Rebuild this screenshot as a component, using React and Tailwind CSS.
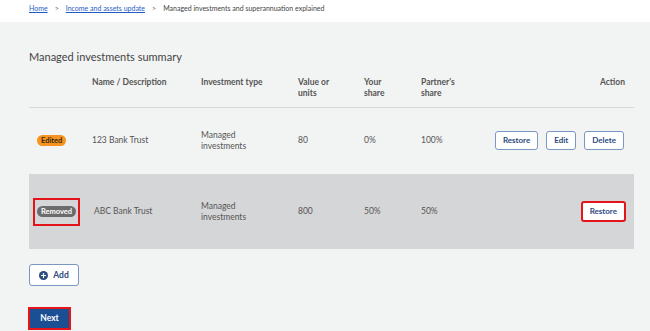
import { Plus } from 'lucide-react';

const rows = [
  { status: 'Edited', name: '123 Bank Trust', type: 'Managed investments', value: '80', yours: '0%', partner: '100%', removed: false },
  { status: 'Removed', name: 'ABC Bank Trust', type: 'Managed investments', value: '800', yours: '50%', partner: '50%', removed: true },
];

function OutlineBtn({ children, className = '' }) {
  return (
    <button className={`h-[19px] px-[7px] rounded-[3px] border border-[#7b97c4] bg-white text-[8px] font-bold text-[#2b4a7e] ${className}`}>
      {children}
    </button>
  );
}

export default function App() {
  return (
    <div className="w-[650px] h-[331px] overflow-hidden bg-[#f2f3f3] text-[#444]" style={{ fontFamily: 'Lato, "Open Sans", sans-serif' }}>
      {/* breadcrumb */}
      <div className="h-[22px] bg-white flex items-center pl-[29px] gap-[7px] text-[7px] pb-[5px]">
        <a className="text-[#1f5bc4] underline">Home</a>
        <span className="text-[#666]">&gt;</span>
        <a className="text-[#1f5bc4] underline">Income and assets update</a>
        <span className="text-[#666]">&gt;</span>
        <span className="text-[#444]">Managed investments and superannuation explained</span>
      </div>

      <div className="px-[29px] pr-[16px]">
        <h1 className="mt-[26px] text-[11px] text-[#444] leading-[18px]">Managed investments summary</h1>

        {/* header */}
        <div className="mt-[8px] grid grid-cols-[63px_109px_97px_66px_57px_1fr_auto] text-[8.5px] font-bold text-[#555] leading-[11px] border-b border-[#d6d6d6] pb-[8px] pt-[3px] pr-[9px]">
          <div />
          <div>Name / Description</div>
          <div>Investment type</div>
          <div>Value or<br />units</div>
          <div>Your<br />share</div>
          <div>Partner's<br />share</div>
          <div>Action</div>
        </div>

        {rows.map((r) => (
          <div
            key={r.name}
            className={`grid grid-cols-[63px_109px_97px_66px_57px_1fr_auto] items-center text-[8.5px] text-[#555] leading-[11px] ${r.removed ? 'bg-[#d5d6d8] h-[75px] mt-[1px] pr-[8px]' : 'h-[65px] pr-[10px]'}`}
          >
            <div className="pl-[4px]">
              {r.removed ? (
                <div className="inline-flex items-center justify-center w-[47px] h-[28px] border-2 border-[#e5141b]">
                  <span className="rounded-full bg-[#6c6c6c] text-white text-[7.5px] font-bold px-[4px] leading-[11px]">Removed</span>
                </div>
              ) : (
                <span className="ml-[4px] rounded-full bg-[#f7931e] text-[#3a2a10] text-[7.5px] font-bold px-[4px] py-[1px] leading-[9px]">Edited</span>
              )}
            </div>
            <div className={r.removed ? 'pl-[2px]' : ''}>{r.name}</div>
            <div>Managed<br />investments</div>
            <div>{r.value}</div>
            <div>{r.yours}</div>
            <div>{r.partner}</div>
            <div className="flex gap-[8px]">
              {r.removed ? (
                <OutlineBtn className="border-2 border-[#e5141b] h-[21px] px-[7px]">Restore</OutlineBtn>
              ) : (
                <>
                  <OutlineBtn>Restore</OutlineBtn>
                  <OutlineBtn>Edit</OutlineBtn>
                  <OutlineBtn>Delete</OutlineBtn>
                </>
              )}
            </div>
          </div>
        ))}

        <button className="mt-[15px] h-[22px] w-[50px] rounded-[3px] border border-[#7b97c4] bg-white flex items-center justify-center gap-[5px] text-[8.5px] font-bold text-[#2b4a7e]">
          <span className="w-[9px] h-[9px] rounded-full bg-[#2b4a7e] flex items-center justify-center">
            <Plus size={7} strokeWidth={4} color="white" />
          </span>
          Add
        </button>

        <div className="mt-[21px] -ml-[1px] w-fit border-2 border-[#e5141b]">
          <button className="block h-[19px] w-[39px] bg-[#1b4f94] text-white text-[8.5px] font-bold">Next</button>
        </div>
      </div>
    </div>
  );
}
